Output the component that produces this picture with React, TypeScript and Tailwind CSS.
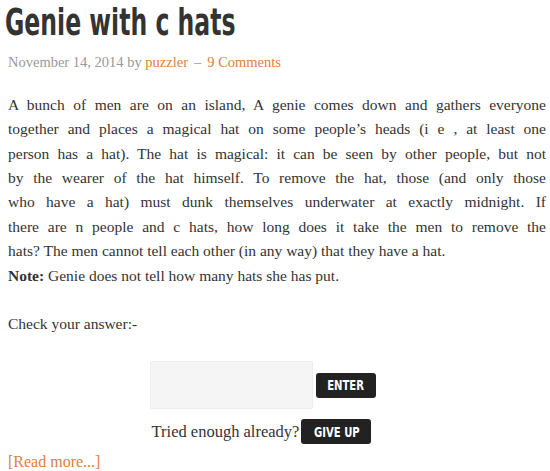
const serif = "font-['Liberation_Serif','DejaVu_Serif',serif]";

const lines = [
  'A bunch of men are on an island, A genie comes down and gathers everyone',
  "together and places a magical hat on some people\u2019s heads (i e , at least one",
  'person has a hat). The hat is magical: it can be seen by other people, but not',
  'by the wearer of the hat himself. To remove the hat, those (and only those',
  'who have a hat) must dunk themselves underwater at exactly midnight. If',
  'there are n people and c hats, how long does it take the men to remove the',
];

function DarkButton({ label, w }: { label: string; w: string }) {
  return (
    <button className={`${w} bg-[#222] text-white rounded-[3px] h-[25px] flex items-center justify-center`}>
      <span className="inline-block scale-x-[0.72] text-[14px] font-bold font-['DejaVu_Sans',sans-serif] whitespace-nowrap">
        {label}
      </span>
    </button>
  );
}

export default function App() {
  return (
    <div className="w-[550px] h-[471px] bg-white overflow-hidden px-2 text-[#333]">
      <div className="h-[45px]">
        <h1 className="ml-[-3px] inline-block origin-left scale-x-[0.62] text-[38px] leading-[45px] text-[#333] font-bold font-['DejaVu_Sans',sans-serif] whitespace-nowrap">
          Genie with c hats
        </h1>
      </div>
      <div className={`${serif} text-[14.5px] text-[#999] mt-[7px]`}>
        November 14, 2014 by <span className="text-[#e0803a]">puzzler</span>
        <span className="mx-1.5">&ndash;</span>
        <span className="text-[#e0803a]">9 Comments</span>
      </div>
      <div className={`${serif} text-[15.5px] leading-[24.4px] mt-[19px] mr-[-4px]`}>
        {lines.map((l) => (
          <div key={l} className="text-justify [text-align-last:justify]">
            {l}
          </div>
        ))}
        <div>hats? The men cannot tell each other (in any way) that they have a hat.</div>
        <div>
          <b>Note:</b> Genie does not tell how many hats she has put.
        </div>
        <div className="mt-[24px]">Check your answer:-</div>
        <div className="flex flex-col items-center mt-[25px] ml-[-28px]">
          <div className="flex items-center gap-[3px]">
            <div className="w-[163px] h-[48px] bg-[#f5f5f5] border border-[#ececec] rounded-[2px]" />
            <DarkButton label="ENTER" w="w-[60px]" />
          </div>
          <div className="flex items-center gap-[2px] mt-[10px] ml-[-3px]">
            <span className="text-[16.5px]">Tried enough already?</span>
            <DarkButton label="GIVE UP" w="w-[70px]" />
          </div>
        </div>
        <div className="text-[#e0803a] text-[16px] mt-[6px]">[Read more...]</div>
      </div>
    </div>
  );
}
